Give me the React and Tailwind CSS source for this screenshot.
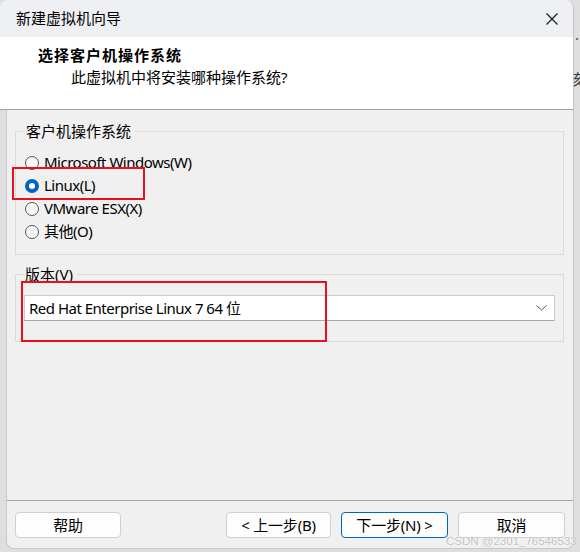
import React from "react";

function Radio({ checked, label }) {
  return (
    <label className="flex items-center h-[23px] gap-[5px]">
      {checked ? (
        <span className="w-[14px] h-[14px] rounded-full bg-[#0067c0] flex items-center justify-center">
          <span className="w-[6px] h-[6px] rounded-full bg-white" />
        </span>
      ) : (
        <span className="w-[14px] h-[14px] rounded-full border border-[#555555] bg-[#f7f7f7]" />
      )}
      <span className="text-[15px] leading-none text-black tracking-[-0.5px]">{label}</span>
    </label>
  );
}

function Btn({ children, primary, w }) {
  return (
    <button
      className={
        "h-[26px] rounded-[4px] bg-[#fdfdfd] text-[15px] leading-none text-black flex items-center justify-center tracking-[-0.2px] " +
        (primary ? "border border-[#0067c0] " : "border border-[#d0d0d0] ") +
        w
      }
    >
      {children}
    </button>
  );
}

export default function App() {
  return (
    <div className="relative w-[580px] h-[552px] overflow-hidden bg-[#dedede] font-['Noto_Sans','Noto_Sans_CJK_SC',sans-serif]">
      <div className="flex flex-row h-full">
        <div className="w-[574px] h-full flex flex-col">
          {/* title bar */}
          <div className="h-[37px] bg-[#eff0f3] rounded-t-[8px] border-r border-[#c4c4c4] flex items-center justify-between pl-[16px] pr-[14px]">
            <span className="text-[15px] leading-none text-black">新建虚拟机向导</span>
            <svg width="14" height="14" viewBox="0 0 14 14">
              <path d="M1.5 1.5 L12.5 12.5 M12.5 1.5 L1.5 12.5" stroke="#1a1a1a" strokeWidth="1.2" fill="none" />
            </svg>
          </div>
          {/* header */}
          <div className="h-[73px] bg-white border-b border-[#a0a0a0] border-r border-r-[#c4c4c4] flex flex-col pl-[38px] pt-[9px]">
            <span className="text-[15px] font-bold leading-[18px] tracking-[1px] text-black">选择客户机操作系统</span>
            <span className="text-[15px] leading-[18px] mt-[4px] ml-[33px] text-black">此虚拟机中将安装哪种操作系统?</span>
          </div>
          {/* body */}
          <div className="ml-[6px] h-[439px] bg-[#f0f0f0] border-l border-r border-b border-[#c8c8c8] rounded-b-[8px] flex flex-col">
            <fieldset className="ml-[8px] mr-[9px] mt-[12px] h-[133px] border border-[#dadada] px-[9px] pt-[11px]">
              <legend className="text-[15px] leading-[18px] pl-[1px] pr-[4px] text-black">客户机操作系统</legend>
              <div className="flex flex-col">
                <Radio label="Microsoft Windows(W)" />
                <Radio checked label="Linux(L)" />
                <Radio label="VMware ESX(X)" />
                <Radio label="其他(O)" />
              </div>
            </fieldset>
            <fieldset className="ml-[8px] mr-[9px] mt-[10px] h-[77px] border border-[#dadada] px-[8px] pt-[12px]">
              <legend className="text-[15px] leading-[18px] pl-[1px] pr-[4px] text-black">版本(V)</legend>
              <div className="h-[26px] bg-white border border-[#cccccc] border-b-[#a8a8a8] flex items-center justify-between pl-[4px] pr-[7px]">
                <span className="text-[15px] leading-none text-black tracking-[-0.5px]">Red Hat Enterprise Linux 7 64 位</span>
                <svg width="11" height="6" viewBox="0 0 11 6">
                  <path d="M0.5 0.5 L5.5 5 L10.5 0.5" stroke="#555" strokeWidth="1" fill="none" />
                </svg>
              </div>
            </fieldset>
            <div className="flex-1" />
            <div className="border-t border-[#a8a8a8] h-[48px] flex items-start pt-[11px] pl-[8px]">
              <Btn w="w-[106px]">帮助</Btn>
              <div className="w-[105px]" />
              <Btn w="w-[105px]">&lt; 上一步(B)</Btn>
              <div className="w-[10px]" />
              <Btn primary w="w-[107px]">下一步(N) &gt;</Btn>
              <div className="w-[10px]" />
              <Btn w="w-[107px]">取消</Btn>
            </div>
          </div>
        </div>
        <div className="flex-1 relative overflow-hidden">
          <span className="absolute left-[1px] top-[31px] text-[15px] leading-none text-[#555]">·</span>
          <span className="absolute -left-[6px] top-[72px] text-[15px] leading-none text-[#3a3a3a]">该</span>
        </div>
      </div>
      {/* annotation boxes */}
      <div className="absolute left-[12px] top-[167px] w-[133px] h-[33px] border-2 border-[#e8101c]" />
      <div className="absolute left-[21px] top-[281px] w-[306px] h-[61px] border-2 border-[#e8101c]" />
      {/* watermark */}
      <span className="absolute left-[446px] top-[536px] whitespace-nowrap font-['Liberation_Sans',sans-serif] text-[11.5px] leading-none text-[#c4c4c4] [text-shadow:0_0_2px_#fff]">
        CSDN @2301_76546533
      </span>
    </div>
  );
}
